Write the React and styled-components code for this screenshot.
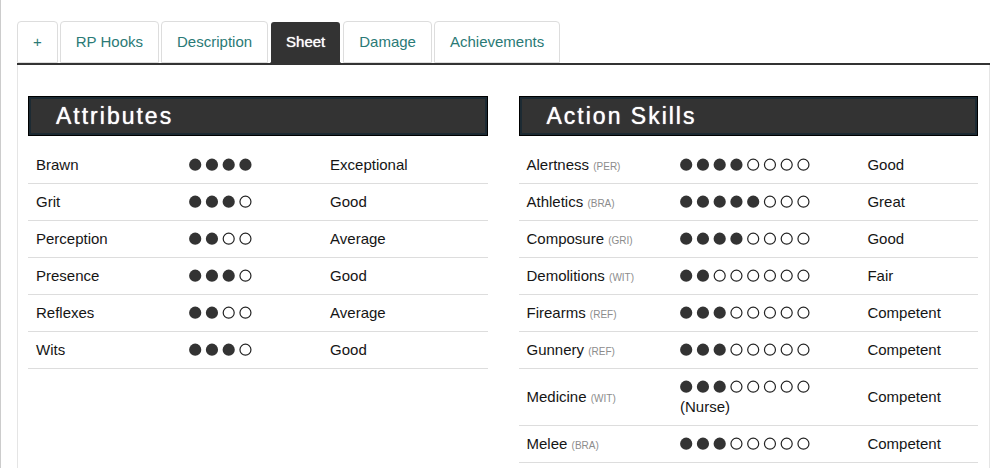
import React from "react";
import styled, { createGlobalStyle } from "styled-components";

const GlobalStyle = createGlobalStyle`
  * { box-sizing: border-box; }
  body {
    margin: 0;
    background: #fff;
    color: #151515;
    font: 15px/20px "Liberation Sans", Arial, sans-serif;
  }
`;

const Page = styled.main`
  display: flex;
  flex-direction: column;
  min-height: 100vh;
  padding: 21px 10px 0 16px;
  border-left: 1px solid #ccc;
`;

const TabBar = styled.nav`
  display: flex;
  gap: 2px;
  border-bottom: 2px solid #333;
`;

const Tab = styled.a`
  padding: 10px 15px;
  border: 1px solid ${(p) => (p.$active ? "transparent" : "#ddd")};
  border-radius: 4px 4px 0 0;
  background: ${(p) => (p.$active ? "#333" : "#fff")};
  background-clip: ${(p) => (p.$active ? "padding-box" : "border-box")};
  color: ${(p) => (p.$active ? "#fff" : "#2a7a76")};
  text-shadow: ${(p) => (p.$active ? "0 0 1px #fff" : "none")};
  text-decoration: none;
  white-space: nowrap;
  ${(p) => p.$active && "border-bottom-color: #333;"}
`;

const Panel = styled.div`
  flex: 1;
  display: grid;
  grid-template-columns: 1fr 1fr;
  align-items: start;
  gap: 31px;
  padding: 31px 11px 0 10px;
  border: solid #e5e5e5;
  border-width: 0 1px;
`;

const Heading = styled.h2`
  margin: 0 0 11px;
  padding: 0 27px;
  border: 1px solid #000;
  box-shadow: inset 0 0 0 2px #1c2a33;
  background: #333;
  color: #fff;
  font-size: 23px;
  font-weight: 400;
  line-height: 38px;
  letter-spacing: 2px;
  text-shadow: 0 0 1px #fff;
`;

const Table = styled.table`
  width: 100%;
  table-layout: fixed;
  border-collapse: separate;
  border-spacing: 0;
`;

const NameCell = styled.th`
  width: 33.4%;
  padding: 8px;
  border-bottom: 1px solid #ddd;
  font-weight: 400;
  text-align: left;
`;

const Cell = styled.td`
  width: ${(p) => p.$width || "auto"};
  padding: 8px;
  border-bottom: 1px solid #ddd;
`;

const Linked = styled.small`
  color: #8c8c8c;
  font-size: 10px;
  line-height: 1;
`;

const Dots = styled.svg`
  display: block;
  height: 20px;
`;

const PITCH = 16.75;

function Rating({ value, max }) {
  const width = Math.ceil((max - 1) * PITCH + 13);
  return (
    <Dots width={width} viewBox={`0 0 ${width} 20`} role="img" aria-label={`${value} of ${max}`}>
      {Array.from({ length: max }, (_, i) => (
        <circle
          key={i}
          cx={6.2 + i * PITCH}
          cy="9.7"
          r={i < value ? 6.1 : 5.5}
          fill={i < value ? "#333" : "none"}
          stroke={i < value ? "none" : "#222"}
          strokeWidth="1.2"
        />
      ))}
    </Dots>
  );
}

function StatBlock({ title, max, dotsWidth, rows }) {
  return (
    <section>
      <Heading>{title}</Heading>
      <Table aria-label={title}>
        <tbody>
          {rows.map(([name, value, level, linked, note]) => (
            <tr key={name}>
              <NameCell scope="row">
                {name} {linked && <Linked>({linked})</Linked>}
              </NameCell>
              <Cell $width={dotsWidth}>
                <Rating value={value} max={max} />
                {note}
              </Cell>
              <Cell>{level}</Cell>
            </tr>
          ))}
        </tbody>
      </Table>
    </section>
  );
}

const tabs = ["+", "RP Hooks", "Description", "Sheet", "Damage", "Achievements"];

const attributes = [
  ["Brawn", 4, "Exceptional"],
  ["Grit", 3, "Good"],
  ["Perception", 2, "Average"],
  ["Presence", 3, "Good"],
  ["Reflexes", 2, "Average"],
  ["Wits", 3, "Good"],
];

const skills = [
  ["Alertness", 4, "Good", "PER"],
  ["Athletics", 5, "Great", "BRA"],
  ["Composure", 4, "Good", "GRI"],
  ["Demolitions", 2, "Fair", "WIT"],
  ["Firearms", 3, "Competent", "REF"],
  ["Gunnery", 3, "Competent", "REF"],
  ["Medicine", 3, "Competent", "WIT", "(Nurse)"],
  ["Melee", 3, "Competent", "BRA"],
];

export default function App() {
  return (
    <Page>
      <GlobalStyle />
      <TabBar>
        {tabs.map((tab) => (
          <Tab
            key={tab}
            href="#sheet"
            $active={tab === "Sheet"}
            aria-current={tab === "Sheet" ? "page" : undefined}
          >
            {tab}
          </Tab>
        ))}
      </TabBar>
      <Panel id="sheet">
        <StatBlock title="Attributes" max={4} dotsWidth="30.6%" rows={attributes} />
        <StatBlock title="Action Skills" max={8} dotsWidth="40.8%" rows={skills} />
      </Panel>
    </Page>
  );
}
